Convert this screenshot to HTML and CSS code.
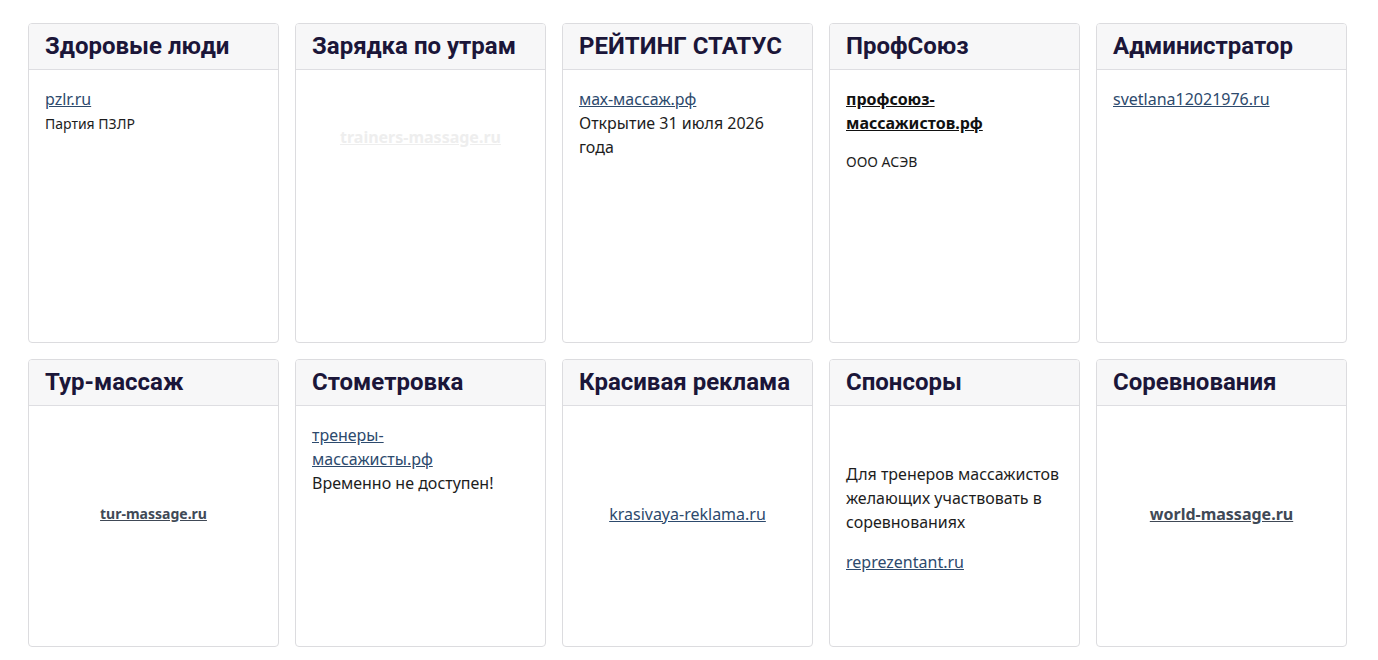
FILE: index.html
```html
<!DOCTYPE html>
<html lang="ru">

<head>
    <meta charset="UTF-8">
    <meta name="viewport" content="width=device-width, initial-scale=1.0">
    <title>Партнёры</title>
    <link rel="stylesheet" href="styles.css">
</head>

<body>
    <div class="grid">
        <!-- первый ряд -->
        <div class="card">
            <div class="card-header">Здоровые люди</div>
            <div class="card-body">
                <a href="#" class="link">pzlr.ru</a>
                <p class="small">Партия ПЗЛР</p>
            </div>
        </div>

        <div class="card">
            <div class="card-header">Зарядка по утрам</div>
            <div class="card-body center-top">
                <a href="#" class="link bold faded">trainers-massage.ru</a>
            </div>
        </div>

        <div class="card">
            <div class="card-header">РЕЙТИНГ СТАТУС</div>
            <div class="card-body">
                <a href="#" class="link">мах-массаж.рф</a>
                <p class="text">Открытие 31 июля 2026 года</p>
            </div>
        </div>

        <div class="card">
            <div class="card-header">ПрофСоюз</div>
            <div class="card-body">
                <a href="#" class="link bold dark">профсоюз-массажистов.рф</a>
                <p class="small spaced">ООО АСЭВ</p>
            </div>
        </div>

        <div class="card">
            <div class="card-header">Администратор</div>
            <div class="card-body">
                <a href="#" class="link">svetlana12021976.ru</a>
            </div>
        </div>

        <!-- второй ряд -->
        <div class="card">
            <div class="card-header">Тур-массаж</div>
            <div class="card-body centered">
                <a href="#" class="link bold gray small-link">tur-massage.ru</a>
            </div>
        </div>

        <div class="card">
            <div class="card-header">Стометровка</div>
            <div class="card-body">
                <a href="#" class="link">тренеры-<br>массажисты.рф</a>
                <p class="text">Временно не доступен!</p>
            </div>
        </div>

        <div class="card">
            <div class="card-header">Красивая реклама</div>
            <div class="card-body centered">
                <a href="#" class="link">krasivaya-reklama.ru</a>
            </div>
        </div>

        <div class="card">
            <div class="card-header">Спонсоры</div>
            <div class="card-body centered left">
                <p class="text">Для тренеров массажистов желающих участвовать в соревнованиях</p>
                <a href="#" class="link spaced-top">reprezentant.ru</a>
            </div>
        </div>

        <div class="card">
            <div class="card-header">Соревнования</div>
            <div class="card-body centered">
                <a href="#" class="link bold gray">world-massage.ru</a>
            </div>
        </div>
    </div>
</body>

</html>
```

FILE: styles.css
```css
body {
    margin: 0;
    padding: 23px 31px 0 28px;
    background-color: #fff;
    font-family: 'Noto Sans', 'Open Sans', sans-serif;
    color: #222;
}

.grid {
    display: grid;
    grid-template-columns: repeat(5, 1fr);
    grid-template-rows: 320px 288px;
    column-gap: 16px;
    row-gap: 16px;
}

.card {
    border: 1px solid #dcdcdf;
    border-radius: 4px;
    display: flex;
    flex-direction: column;
    overflow: hidden;
}

.card-header {
    background-color: #f7f7f8;
    border-bottom: 1px solid #dedee2;
    height: 46px;
    padding: 0 16px 2px;
    box-sizing: border-box;
    display: flex;
    align-items: center;
    font-family: 'Roboto', sans-serif;
    font-weight: 700;
    font-size: 24px;
    color: #1b1639;
    white-space: nowrap;
}

.card-body {
    flex: 1;
    padding: 17px 16px 16px;
    display: flex;
    flex-direction: column;
    align-items: flex-start;
}

.card-body.center-top {
    align-items: center;
    padding-top: 55px;
}

.card-body.centered {
    justify-content: center;
    align-items: center;
    padding-bottom: 42px;
}

.card-body.centered.left {
    align-items: flex-start;
    padding-bottom: 34px;
}

.link {
    font-size: 16px;
    line-height: 24px;
    color: #2d4a6d;
    text-decoration: underline;
}

.link.bold {
    font-weight: 700;
}

.link.faded {
    color: #eeeeee;
}

.link.dark {
    color: #111;
}

.link.gray {
    color: #404956;
}

.link.small-link {
    font-size: 14px;
}

.text {
    margin: 0;
    font-size: 16px;
    line-height: 24px;
    color: #1d1d1d;
}

.small {
    margin: 3px 0 0;
    font-size: 14px;
    line-height: 20px;
    color: #1d1d1d;
}

.small.spaced {
    margin-top: 17px;
}

.spaced-top {
    margin-top: 16px;
}
```
